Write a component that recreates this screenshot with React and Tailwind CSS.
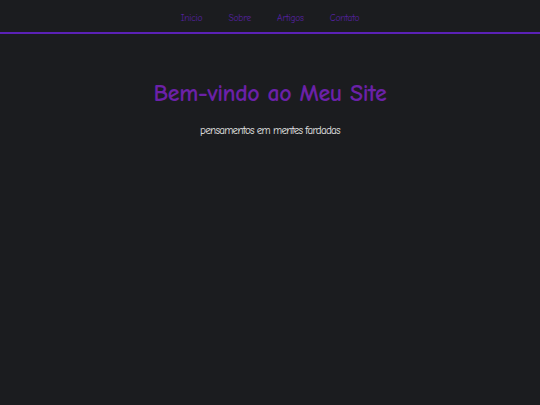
const App = () => {
  const links = ["Inicio", "Sobre", "Artigos", "Contato"];

  return (
    <div
      className="min-h-[405px] bg-[#1b1c1f] text-white"
      style={{ fontFamily: '"Comic Sans MS", "Comic Neue", cursive' }}
    >
      <nav className="h-[34px] pt-[4px] border-b-2 border-[#5b21b6] flex items-center justify-center gap-[26px] text-[9.5px] tracking-[-0.2px]">
        {links.map((l) => (
          <a key={l} href="#" className="text-[#5521a0]">
            {l}
          </a>
        ))}
      </nav>

      <header className="flex flex-col items-center pt-[42px]">
        <h1 className="text-[24px] font-bold text-[#6b21a8] leading-[34px] tracking-[-0.4px]">
          Bem-vindo ao Meu Site
        </h1>
        <p className="mt-[13px] text-[11px] text-[#e5e5e5] tracking-[-0.7px]">
          pensamentos em mentes fardadas
        </p>
      </header>
    </div>
  );
};

export default App;
